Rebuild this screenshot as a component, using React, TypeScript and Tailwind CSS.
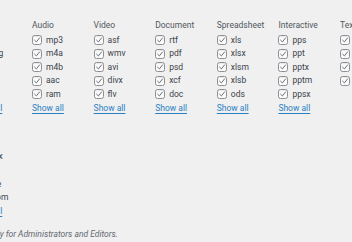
import React from "react";

type Col = { title: string; items: string[]; more: boolean };

const top: Col[] = [
  { title: "Image", items: ["jpg", "apng", "jpe", "gif", "png"], more: true },
  { title: "Audio", items: ["mp3", "m4a", "m4b", "aac", "ram"], more: true },
  { title: "Video", items: ["asf", "wmv", "avi", "divx", "flv"], more: true },
  { title: "Document", items: ["rtf", "pdf", "psd", "xcf", "doc"], more: true },
  { title: "Spreadsheet", items: ["xls", "xlsx", "xlsm", "xlsb", "ods"], more: true },
  { title: "Interactive", items: ["pps", "ppt", "pptx", "pptm", "ppsx"], more: true },
  { title: "Text", items: ["txt", "csv", "tsv", "ics"], more: false },
];

const bottom: Col[] = [
  { title: "Other", items: ["docx", "txt", "note", "bloom"], more: true },
];

function Check() {
  return (
    <span className="flex h-[10px] w-[10px] shrink-0 items-center justify-center rounded-[2.5px] border border-[#8c8f94] bg-[#fbfbfb] shadow-[inset_0_1px_1px_rgba(0,0,0,0.08)]">
      <svg viewBox="0 0 10 10" className="h-[8px] w-[8px]">
        <path d="M2 5.2 L4.2 7.4 L8.2 2.4" fill="none" stroke="#646970" strokeWidth="1.2" strokeLinecap="round" strokeLinejoin="round" />
      </svg>
    </span>
  );
}

function Column({ col }: { col: Col }) {
  return (
    <div className="flex w-[61.6px] shrink-0 flex-col">
      <div className="mb-[1.4px] flex h-[13.6px] items-center whitespace-nowrap text-[#50575e]">{col.title}</div>
      {col.items.map((it) => (
        <div key={it} className="flex h-[13.6px] items-center gap-[4px] whitespace-nowrap text-[#3c434a]">
          <Check />
          <span>{it}</span>
        </div>
      ))}
      {col.more && (
        <div className="flex h-[13.6px] items-center whitespace-nowrap">
          <span className="text-[#2a7fc1] underline underline-offset-[1.5px]">Show all</span>
        </div>
      )}
    </div>
  );
}

export default function App() {
  return (
    <div
      className="h-[242px] w-[352px] overflow-hidden bg-[#f0f0f1] text-[8.5px]"
      style={{ fontFamily: "Roboto, 'Liberation Sans', sans-serif" }}
    >
      <div className="-ml-[29.6px] flex flex-col pt-[18.2px]">
        <div className="flex">
          {top.map((c) => (
            <Column key={c.title} col={c} />
          ))}
        </div>
        <div className="mt-[20.2px] flex">
          {bottom.map((c) => (
            <Column key={c.title} col={c} />
          ))}
        </div>
      </div>
      <div className="mt-[10px] flex w-[118px] justify-end">
        <div className="flex h-[13.6px] items-center whitespace-nowrap italic text-[#646970]">
          Available only for Administrators and Editors.
        </div>
      </div>
    </div>
  );
}
